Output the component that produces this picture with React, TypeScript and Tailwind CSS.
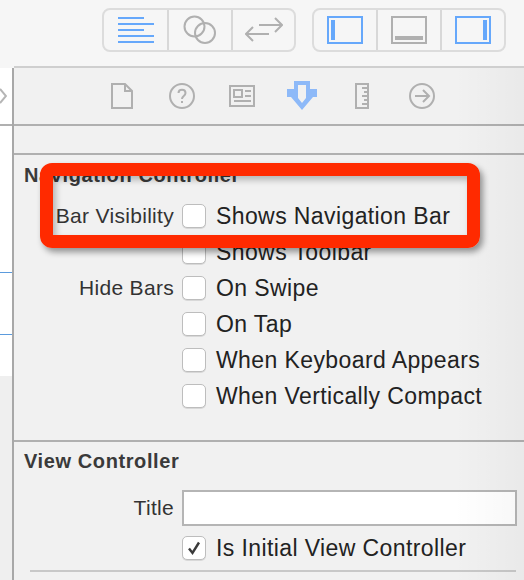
import React from "react";

const Check = ({ checked }: { checked?: boolean }) => (
  <span className="flex h-[24px] w-[24px] shrink-0 items-center justify-center rounded-[5px] border border-[#bdbdbd] bg-white shadow-[0_1px_0_#d8d8d8]">
    {checked && (
      <svg width="16" height="16" viewBox="0 0 16 16" fill="none">
        <path d="M3 8.5 L6.5 13 L13 2.5" stroke="#3a3a3a" strokeWidth="2.4" />
      </svg>
    )}
  </span>
);

const Row = ({ label, text, checked }: { label?: string; text: string; checked?: boolean }) => (
  <div className="flex h-[36px] items-center">
    <span className="w-[168px] pr-[8px] text-right text-[21px] tracking-[0.3px] whitespace-nowrap text-[#333]">{label}</span>
    <Check checked={checked} />
    <span className="ml-[10px] text-[23px] tracking-[0.4px] whitespace-nowrap text-[#222]">{text}</span>
  </div>
);

const Seg = ({ children, w, last }: { children: React.ReactNode; w: string; last?: boolean }) => (
  <div className={`flex items-center justify-center ${w} ${last ? "" : "border-r-2 border-[#d8d8d8]"}`}>{children}</div>
);

const BLUE = "#66a8fb";
const GRAY = "#b0b0b0";

export default function App() {
  return (
    <div className="relative flex h-[580px] w-[524px] overflow-hidden bg-[#f1f1f1]" style={{ fontFamily: '"Liberation Sans", Arial, sans-serif' }}>
      {/* left sliver */}
      <div className="flex w-[14px] shrink-0 flex-col">
        <div className="h-[68px] bg-[#f6f6f6]" />
        <div className="flex h-[308px] flex-col bg-white">
          <div className="flex h-[56px] items-center">
            <svg width="7" height="16" viewBox="0 0 7 16" fill="none">
              <path d="M0 1 L6 8 L0 15" stroke="#b5b5b5" strokeWidth="2" />
            </svg>
          </div>
          <div className="h-[2px] bg-[#b0b0b0]" />
          <div className="mt-[146px] h-[1px] bg-[#5b9bdd]" />
          <div className="mt-[61px] h-[1px] bg-[#5b9bdd]" />
        </div>
        <div className="flex-1 bg-[#efefef]" />
      </div>

      <div className="flex min-w-0 flex-1 flex-col">
        {/* toolbar */}
        <div className="flex h-[68px] shrink-0 items-start border-b-2 border-[#cfcfcf] bg-[#f6f6f6] pt-[8px] pl-[88px]">
          <div className="flex h-[44px] rounded-[8px] border-2 border-[#dcdcdc]">
            <Seg w="w-[65px]">
              <svg width="36" height="28" viewBox="0 0 36 28">
                <g fill={BLUE}>
                  <rect x="0" y="1" width="26" height="2" />
                  <rect x="0" y="7" width="36" height="2" />
                  <rect x="0" y="13" width="26" height="2" />
                  <rect x="0" y="19" width="36" height="2" />
                  <rect x="0" y="25" width="36" height="2" />
                </g>
              </svg>
            </Seg>
            <Seg w="w-[64px]">
              <svg width="34" height="30" viewBox="0 0 34 30" fill="none" stroke={GRAY} strokeWidth="2">
                <circle cx="11.5" cy="11.5" r="10" />
                <circle cx="22" cy="18" r="10" />
              </svg>
            </Seg>
            <Seg w="w-[61px]" last>
              <svg width="38" height="28" viewBox="0 0 38 28" fill="none" stroke={GRAY} strokeWidth="2">
                <path d="M14 9 H36 M30 2 L37 9 L30 16" />
                <path d="M24 18 H2 M8 11 L1 18 L8 25" />
              </svg>
            </Seg>
          </div>
          <div className="ml-[16px] flex h-[44px] rounded-[8px] border-2 border-[#dcdcdc]">
            <Seg w="w-[64px]">
              <svg width="36" height="28" viewBox="0 0 36 28">
                <rect x="1" y="1" width="34" height="26" fill="none" stroke={BLUE} strokeWidth="2" />
                <rect x="4" y="4" width="4" height="20" fill={BLUE} />
              </svg>
            </Seg>
            <Seg w="w-[64px]">
              <svg width="36" height="28" viewBox="0 0 36 28">
                <rect x="1" y="1" width="34" height="26" fill="none" stroke={GRAY} strokeWidth="2" />
                <rect x="4" y="20" width="28" height="4" fill={GRAY} />
              </svg>
            </Seg>
            <Seg w="w-[62px]" last>
              <svg width="36" height="28" viewBox="0 0 36 28">
                <rect x="1" y="1" width="34" height="26" fill="none" stroke={BLUE} strokeWidth="2" />
                <rect x="28" y="4" width="4" height="20" fill={BLUE} />
              </svg>
            </Seg>
          </div>
        </div>

        <div className="flex min-h-0 flex-1 flex-col">
          {/* inspector tabs */}
          <div className="relative flex h-[58px] shrink-0 items-center border-b-2 border-[#b0b0b0] bg-[#f1f1f1] pl-[97px]">
            <svg width="22" height="26" viewBox="0 0 22 26" fill="none" stroke={GRAY} strokeWidth="2">
              <path d="M1 1 H14 L21 8 V25 H1 Z M14 1 V8 H21" />
            </svg>
            <svg className="ml-[36px]" width="26" height="26" viewBox="0 0 26 26" fill="none" stroke={GRAY} strokeWidth="2">
              <circle cx="13" cy="13" r="12" />
              <path d="M9.5 10 C9.5 5.5 16.5 5.5 16.5 10 C16.5 13 13 13 13 16" />
              <rect x="12" y="18" width="2" height="2" fill={GRAY} stroke="none" />
            </svg>
            <svg className="ml-[34px]" width="26" height="22" viewBox="0 0 26 22" fill="none" stroke={GRAY} strokeWidth="2">
              <rect x="1" y="1" width="24" height="20" />
              <rect x="5" y="5" width="8" height="7" />
              <path d="M16 6 H22 M16 11 H22 M5 16 H22" />
            </svg>
            <svg className="ml-[32px]" width="30" height="30" viewBox="0 0 30 30" fill="#8db9f8">
              <path fillRule="evenodd" d="M7 0 H23 V8 H30 V16 H26 L15 29 L4 16 H0 V8 H7 Z M11 4 V17 L15 22 L19 17 V4 Z" />
            </svg>
            <svg className="ml-[38px]" width="14" height="26" viewBox="0 0 14 26" fill="none" stroke={GRAY} strokeWidth="2">
              <rect x="1" y="1" width="12" height="24" />
              <path d="M7 5 H13 M9 9 H13 M7 13 H13 M9 17 H13 M7 21 H13" />
            </svg>
            <svg className="ml-[40px]" width="26" height="26" viewBox="0 0 26 26" fill="none" stroke={GRAY} strokeWidth="2">
              <circle cx="13" cy="13" r="12" />
              <path d="M6 13 H19 M14 7 L20 13 L14 19" />
            </svg>
          </div>

          {/* body */}
          <div className="flex min-h-0 flex-1 flex-col">
            <div className="h-[29px] shrink-0 border-b-2 border-[#b0b0b0]" />
            <section className="h-[287px] shrink-0 border-b-2 border-[#b0b0b0] pt-[6px]">
              <h2 className="pl-[10px] text-[20px] leading-[28px] font-bold tracking-[0.6px] whitespace-nowrap text-[#3a3a3a]">Navigation Controller</h2>
              <div className="mt-[9px]">
                <Row label="Bar Visibility" text="Shows Navigation Bar" />
                <Row text="Shows Toolbar" />
                <Row label="Hide Bars" text="On Swipe" />
                <Row text="On Tap" />
                <Row text="When Keyboard Appears" />
                <Row text="When Vertically Compact" />
              </div>
            </section>
            <section className="flex-1 pt-[5px]">
              <h2 className="pl-[10px] text-[20px] leading-[28px] font-bold tracking-[0.6px] whitespace-nowrap text-[#3a3a3a]">View Controller</h2>
              <div className="mt-[15px] flex h-[36px] items-center">
                <span className="w-[168px] pr-[8px] text-right text-[21px] tracking-[0.3px] text-[#333]">Title</span>
                <div className="h-[36px] w-[335px] border-2 border-[#b5b5b5] bg-white" />
              </div>
              <div className="mt-[4px]">
                <Row text="Is Initial View Controller" checked />
              </div>
              <div className="mt-[4px] ml-[16px] h-[2px] w-[486px] bg-[#c8c8c8]" />
            </section>
          </div>
        </div>
      </div>

      {/* vertical rule between sliver and inspector */}
      <div className="absolute top-[68px] bottom-0 left-[12px] w-[2px] bg-[#a8a8a8]" />

      {/* right edge shading */}
      <div className="pointer-events-none absolute top-[68px] right-0 bottom-0 w-[70px] bg-gradient-to-r from-transparent to-[#00000008]" />

      {/* annotation */}
      <div className="absolute top-[163px] left-[40px] h-[85px] w-[440px] rounded-[12px] border-[13px] border-[#ff2a00] shadow-[3px_4px_6px_rgba(0,0,0,0.4),inset_3px_4px_6px_rgba(0,0,0,0.25)]" />
    </div>
  );
}
